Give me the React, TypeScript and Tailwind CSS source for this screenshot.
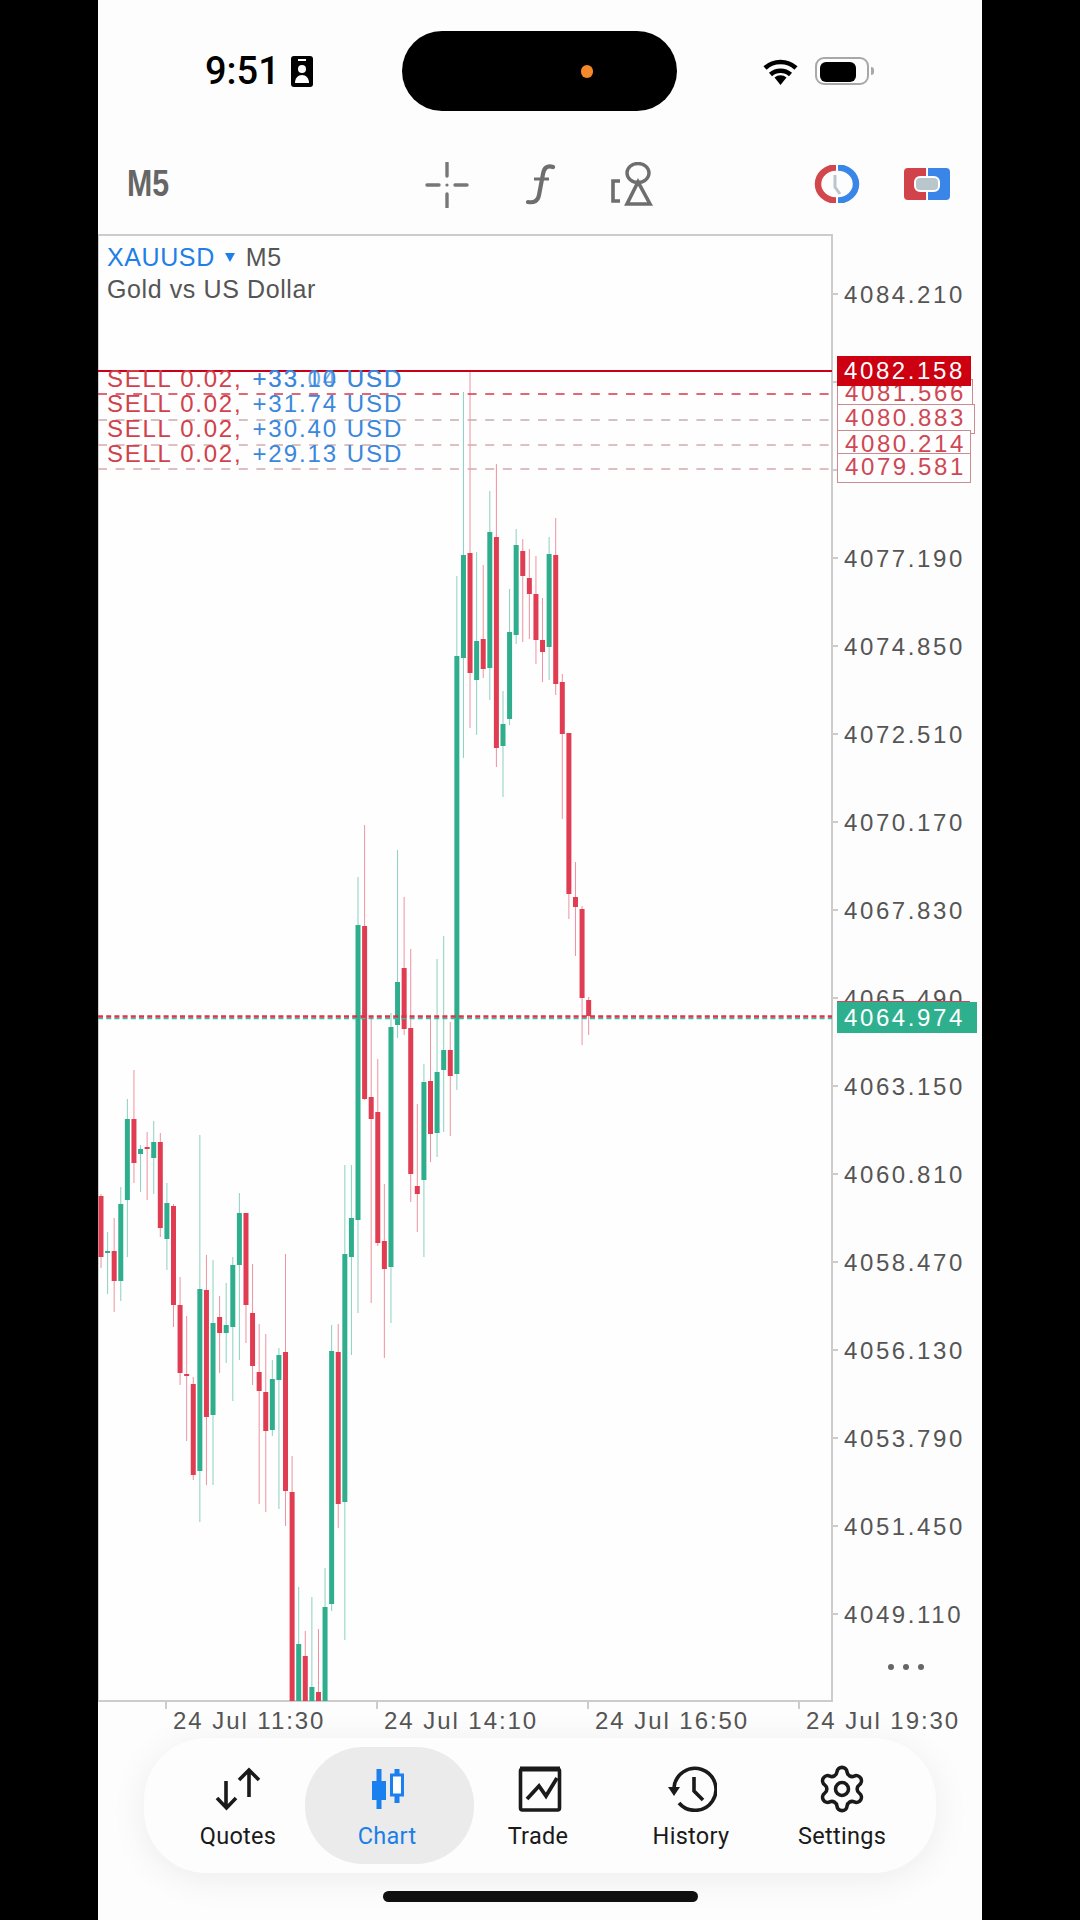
import { Settings } from 'lucide-react'

const SANS = 'font-["Liberation_Sans",Arial,sans-serif]'

// [g/r, wick top, body top, body bottom, wick bottom], real page y values
type Candle = [0 | 1, number, number, number, number]
const CANDLES: Candle[] = [
  [0, 1194, 1196, 1257, 1268], [1, 1232, 1251, 1253, 1294], [0, 1218, 1251, 1281, 1312], [1, 1187, 1204, 1281, 1301],
  [1, 1099, 1119, 1200, 1257], [0, 1070, 1119, 1163, 1183], [1, 1145, 1149, 1154, 1192], [0, 1132, 1147, 1149, 1200],
  [1, 1121, 1142, 1158, 1194], [0, 1133, 1142, 1228, 1237], [1, 1183, 1203, 1239, 1270], [0, 1204, 1206, 1305, 1327],
  [0, 1277, 1305, 1373, 1385], [0, 1316, 1374, 1376, 1441], [0, 1377, 1384, 1475, 1480], [1, 1135, 1289, 1471, 1522],
  [0, 1255, 1290, 1417, 1485], [1, 1260, 1323, 1415, 1485], [0, 1296, 1317, 1333, 1373], [1, 1283, 1325, 1333, 1363],
  [1, 1257, 1265, 1327, 1401], [1, 1193, 1213, 1265, 1360], [0, 1213, 1213, 1305, 1343], [0, 1264, 1313, 1366, 1385],
  [0, 1324, 1372, 1391, 1504], [0, 1334, 1392, 1431, 1512], [1, 1360, 1379, 1430, 1436], [1, 1348, 1355, 1380, 1509],
  [0, 1254, 1352, 1491, 1526], [0, 1456, 1492, 1701, 1701], [1, 1587, 1644, 1701, 1701], [0, 1631, 1656, 1701, 1701],
  [1, 1597, 1687, 1701, 1701], [0, 1629, 1692, 1701, 1701], [1, 1568, 1607, 1701, 1701], [1, 1325, 1351, 1604, 1611],
  [0, 1324, 1352, 1504, 1528], [1, 1165, 1254, 1502, 1640], [1, 1165, 1218, 1257, 1355], [1, 877, 925, 1220, 1313],
  [0, 825, 926, 1099, 1100], [0, 1017, 1097, 1119, 1303], [0, 1059, 1112, 1243, 1246], [0, 1184, 1241, 1269, 1358],
  [1, 1013, 1027, 1267, 1323], [1, 850, 982, 1025, 1038], [0, 897, 968, 1029, 1035], [0, 949, 1028, 1174, 1202],
  [0, 1104, 1186, 1194, 1232], [1, 1064, 1082, 1180, 1257], [0, 1019, 1081, 1134, 1162], [1, 959, 1072, 1133, 1157],
  [1, 936, 1050, 1070, 1132], [0, 1022, 1050, 1076, 1136], [1, 576, 656, 1074, 1090], [1, 392, 555, 658, 758],
  [0, 372, 553, 673, 728], [1, 552, 641, 680, 735], [0, 565, 639, 669, 678], [1, 491, 532, 668, 700],
  [0, 464, 537, 748, 767], [1, 691, 724, 746, 797], [1, 589, 632, 719, 725], [1, 529, 545, 635, 644],
  [0, 539, 551, 576, 642], [0, 549, 578, 594, 639], [0, 556, 594, 640, 664], [0, 598, 640, 652, 682],
  [1, 537, 554, 647, 680], [0, 518, 555, 684, 695], [0, 674, 682, 734, 819], [0, 733, 733, 894, 919],
  [0, 862, 897, 907, 956], [0, 906, 909, 998, 1045], [0, 997, 1000, 1016, 1035],
]

const PRICES: [string, number][] = [
  ['4084.210', 294], ['4077.190', 558], ['4074.850', 646], ['4072.510', 734], ['4070.170', 822], ['4067.830', 910],
  ['4065.490', 998], ['4063.150', 1086], ['4060.810', 1174], ['4058.470', 1262], ['4056.130', 1350],
  ['4053.790', 1438], ['4051.450', 1526], ['4049.110', 1614],
]

const ORDER_TAGS: [string, number, number, number][] = [
  ['4081.566', 379, 406, 136],
  ['4080.883', 404, 434, 138],
  ['4080.214', 430, 456, 134],
  ['4079.581', 453, 483, 134],
]

const ORDER_LINES: [number, string][] = [[394, '#d8344a'], [420, '#c9adad'], [445, '#d5abab'], [469, '#d3a9a9']]

const SELLS = ['+31.74 USD', '+30.40 USD', '+29.13 USD']
const TIMES = ['24 Jul 11:30', '24 Jul 14:10', '24 Jul 16:50', '24 Jul 19:30']

function ChartSvg() {
  return (
    <svg className="absolute inset-0" width={884} height={1468} viewBox="98 234 884 1468">
      {CANDLES.map(([up, wt, bt, bb, wb], i) => {
        const x = 101 + 6.59 * i
        const color = up ? '#2fae8e' : '#e03d52'
        return (
          <g key={i}>
            <line x1={x} x2={x} y1={wt} y2={wb} stroke={color} strokeWidth={1} opacity={0.55} />
            <rect x={x - 2.5} y={bt} width={5} height={Math.max(bb - bt, 2)} fill={color} />
          </g>
        )
      })}
      <rect x={98} y={370} width={734} height={2} fill="#c8001a" />
      {ORDER_LINES.map(([y, c]) => (
        <line key={y} x1={98} x2={832} y1={y} y2={y} stroke={c} strokeWidth={1.5} strokeDasharray="9 8.6" />
      ))}
      <line x1={98} x2={832} y1={1018.5} y2={1018.5} stroke="#33c0a0" strokeWidth={1.5} strokeDasharray="5 3.2" />
      <line x1={98} x2={832} y1={1016.5} y2={1016.5} stroke="#d8344a" strokeWidth={2.5} strokeDasharray="5 3.2" />
      {[...PRICES.map(p => p[1]), 382, 470].map(y => (
        <line key={y} x1={832} x2={838} y1={y} y2={y} stroke="#cccccc" strokeWidth={2} />
      ))}
    </svg>
  )
}

function StatusBar() {
  return (
    <div className="relative h-[112px] shrink-0">
      <div className="absolute left-[107px] top-[52px] flex items-center gap-[11px]">
        <span className='font-["Roboto",sans-serif] font-medium text-[38px] leading-[38px] text-black'>9:51</span>
        <svg width={22} height={31} viewBox="0 0 22 31">
          <rect width={22} height={31} rx={3} fill="#000" />
          <rect x={7} y={3} width={8} height={2} fill="#fff" />
          <circle cx={11} cy={13} r={4} fill="#fff" />
          <path d="M4 27c0-5 3-8 7-8s7 3 7 8z" fill="#fff" />
        </svg>
      </div>
      <div className="absolute left-[304px] top-[31px] w-[275px] h-[80px] rounded-[40px] bg-black">
        <div className="absolute left-[179px] top-[34px] w-[12px] h-[13px] rounded-full bg-[#f5892a]" />
      </div>
      <div className="absolute left-[664px] top-[57px] flex items-center gap-[16px]">
        <svg width={37} height={28} viewBox="0 0 37 28">
          <path d="M18.5 28l-6-7.5a9 9 0 0 1 12 0z" fill="#000" />
          <path d="M3 11a23 23 0 0 1 31 0M8.5 17.5a15 15 0 0 1 20 0" fill="none" stroke="#000" strokeWidth={4.6} />
        </svg>
        <div className="relative w-[54px] h-[28px] rounded-[9px] border-2 border-[#a8a8a8] p-[3px]">
          <div className="w-[36px] h-[20px] rounded-[6px] bg-black" />
          <div className="absolute right-[-7px] top-[8px] w-[3px] h-[8px] rounded-r-full bg-[#a8a8a8]" />
        </div>
      </div>
    </div>
  )
}

function Toolbar() {
  return (
    <div className="relative h-[122px] shrink-0">
      <span className={`absolute left-[29px] top-[53px] origin-left scale-x-[0.82] ${SANS} font-bold text-[37px] leading-[38px] text-[#666666]`}>M5</span>
      <svg className="absolute left-[326px] top-[50px]" width={46} height={46} viewBox="0 0 46 46">
        <path d="M23 1v13M23 32v13M3 23h12M31 23h12" stroke="#777" strokeWidth={3.4} strokeLinecap="round" fill="none" />
        <circle cx={23} cy={23} r={1.6} fill="#777" />
      </svg>
      <svg className="absolute left-[426px] top-[52px]" width={32} height={42} viewBox="0 0 32 42">
        <path d="M29 3c-6-2-9 1-10 7l-4 21c-1 6-5 8-11 7" fill="none" stroke="#6e6e6e" strokeWidth={4.2} strokeLinecap="round" />
        <path d="M10 15h15" stroke="#6e6e6e" strokeWidth={3} />
      </svg>
      <svg className="absolute left-[513px] top-[50px]" width={42} height={44} viewBox="0 0 42 44">
        <ellipse cx={27} cy={11} rx={11} ry={9.500} fill="none" stroke="#6e6e6e" strokeWidth={3.4} />
        <path d="M27 20l-11 22h23z" fill="none" stroke="#6e6e6e" strokeWidth={3.6} />
        <path d="M9 19H2v20h7" fill="none" stroke="#6e6e6e" strokeWidth={3.6} />
      </svg>
      <svg className="absolute left-[716px] top-[53px]" width={46} height={38} viewBox="0 0 46 38">
        <path d="M22 2.5C12 2.5 4 10 4 19s8 16.500 18 16.500" fill="none" stroke="#d2474b" strokeWidth={6.5} />
        <path d="M24 2.500C34 2.500 42 10 42 19s-8 16.500-18 16.500" fill="none" stroke="#3a86e8" strokeWidth={6.5} />
        <path d="M21 10v12l5 7" fill="none" stroke="#bcc5cc" strokeWidth={3} />
      </svg>
      <svg className="absolute left-[806px] top-[56px]" width={46} height={32} viewBox="0 0 46 32">
        <path d="M22 0H4a4 4 0 0 0-4 4v24a4 4 0 0 0 4 4h18z" fill="#d2424a" />
        <path d="M24 0h18a4 4 0 0 1 4 4v24a4 4 0 0 1-4 4H24z" fill="#3a86e8" />
        <rect x={11} y={9} width={24} height={14} rx={5} fill="#b9c6cc" stroke="#fff" strokeWidth={2} />
      </svg>
    </div>
  )
}

function ChartArea() {
  return (
    <div className={`relative h-[1468px] shrink-0 ${SANS}`}>
      <div className="absolute left-0 top-0 w-[735px] h-full border-2 border-l-[1px] border-[#cccccc] bg-[#fefefe]" />
      <ChartSvg />

      <div className="absolute left-[9px] top-[7px] text-[#555555] text-[25px] leading-[32px] tracking-[0.6px]">
        <div className="flex items-center">
          <span className="text-[#1f7fe8] tracking-[0.6px]">XAUUSD</span>
          <span className="ml-[10px] w-0 h-0 border-x-[5px] border-x-transparent border-t-[9px] border-t-[#1f7fe8]" />
          <span className="ml-[11px]">M5</span>
        </div>
        <div>Gold vs US Dollar</div>
      </div>

      {/* open positions */}
      <div className="absolute left-[9px] top-[132px] flex flex-col text-[24px] leading-[25px] tracking-[1.75px]">
        <div className="flex gap-[10px] h-[25px]">
          <span className="text-[#d1414b]">SELL 0.02,</span>
          <span className="relative text-[#3a87dd] tracking-[1.95px]">
            +33.10 USD
            <span className="absolute left-0 top-0 opacity-70">+33.04 USD</span>
          </span>
        </div>
        {SELLS.map(s => (
          <div key={s} className="flex gap-[10px] h-[25px]">
            <span className="text-[#d1414b]">SELL 0.02,</span>
            <span className="text-[#3a87dd] tracking-[1.95px]">{s}</span>
          </div>
        ))}
      </div>

      {PRICES.map(([p, y]) => (
        <span
          key={p}
          className="absolute left-[746px] h-[26px] text-[24px] leading-[26px] tracking-[2.6px] text-[#555555]"
          style={{ top: y - 234 - 12 }}
        >
          {p}
        </span>
      ))}

      {ORDER_TAGS.map(([p, top, bottom, w]) => (
        <div
          key={p}
          className="absolute left-[739px] pl-[7px] border border-[#c98c90] bg-[#fefefe] text-[24px] leading-[26px] tracking-[2.6px] text-[#cf4855] overflow-hidden"
          style={{ top: top - 234, height: bottom - top, width: w }}
        >
          {p}
        </div>
      ))}
      <div className="absolute left-[739px] top-[122px] w-[134px] h-[30px] pl-[7px] bg-[#cc0011] text-[24px] leading-[30px] tracking-[2.6px] text-white">
        4082.158
      </div>

      <div className="absolute left-[739px] top-[767px] w-[133px] h-[2px] bg-[#cf4855]" />
      <div className="absolute left-[739px] top-[768px] w-[140px] h-[31px] pl-[7px] bg-[#2eb08f] text-[24px] leading-[31px] tracking-[2.6px] text-white">
        4064.974
      </div>

      <div className="absolute left-[790px] bottom-[32px] flex gap-[9px]">
        <div className="w-[6px] h-[6px] rounded-full bg-[#666666]" />
        <div className="w-[6px] h-[6px] rounded-full bg-[#666666]" />
        <div className="w-[6px] h-[6px] rounded-full bg-[#666666]" />
      </div>
    </div>
  )
}

function TimeAxis() {
  return (
    <div className={`relative h-[36px] shrink-0 flex pl-[67px] ${SANS}`}>
      {TIMES.map(t => (
        <div key={t} className="relative w-[211px] shrink-0 pl-[8px] pt-[6px] text-[24px] leading-[26px] tracking-[1.95px] whitespace-pre text-[#555555]">
          <div className="absolute left-0 top-0 w-[2px] h-[7px] bg-[#cccccc]" />
          {t}
        </div>
      ))}
    </div>
  )
}

function QuotesIcon() {
  return (
    <svg width={50} height={44} viewBox="0 0 50 44" fill="none" stroke="#1a1a1a" strokeWidth={3.6}>
      <path d="M13 14v27M4 31l9.500 10L23 31" />
      <path d="M36 30V3M26 13l10-10 10 10" />
    </svg>
  )
}

function ChartIcon() {
  return (
    <svg width={36} height={44} viewBox="0 0 36 44" fill="none">
      <path d="M8 2v40M26 2v34" stroke="#1a80f0" strokeWidth={5} />
      <rect x={1} y={14} width={14} height={19} fill="#1a80f0" />
      <rect x={20.500} y={8} width={11} height={20} fill="#fff" stroke="#1a80f0" strokeWidth={3} />
    </svg>
  )
}

function TradeIcon() {
  return (
    <svg width={44} height={46} viewBox="0 0 44 46" fill="none" stroke="#1a1a1a">
      <rect x={2.500} y={3} width={39} height={41} rx={2} strokeWidth={3.6} />
      <path d="M2 3h40" strokeWidth={5} />
      <path d="M9 33l12-13 7 10 11-18" strokeWidth={3.8} />
    </svg>
  )
}

function HistoryIcon() {
  return (
    <svg width={52} height={46} viewBox="0 0 52 46" fill="none" stroke="#1a1a1a" strokeWidth={3.6}>
      <path d="M14 37A21 21 0 1 0 9 22" />
      <path d="M3 21h12l-6 9z" fill="#1a1a1a" stroke="none" />
      <path d="M29 11v14l9 9" />
    </svg>
  )
}

function TabItem({ label, icon, active, labelClass }: { label: string; icon: React.ReactNode; active?: boolean; labelClass?: string }) {
  return (
    <div className="flex flex-col items-center w-[124px] shrink-0">
      <div className="h-[46px] flex items-center justify-center">{icon}</div>
      <span className={`mt-[10px] font-["Roboto",sans-serif] text-[23.5px] leading-[28px] tracking-[0.3px] ${labelClass ?? ''} ${active ? 'text-[#1a80e8]' : 'text-[#1a1a1a]'}`}>{label}</span>
    </div>
  )
}

function TabBar() {
  return (
    <div className="relative shrink-0 mx-[46px] h-[135px] rounded-[62px] bg-[#fdfdfd] shadow-[0_6px_36px_rgba(0,0,0,0.07)] flex items-center pl-[32px] pt-[5px]">
      <div className="absolute left-[161px] top-[9px] w-[169px] h-[117px] rounded-[58px] bg-[#ebebeb]" />
      <div className="relative flex gap-[27px]">
        <TabItem label="Quotes" icon={<QuotesIcon />} />
        <TabItem label="Chart" active icon={<ChartIcon />} labelClass="-ml-[4px]" />
        <TabItem label="Trade" icon={<TradeIcon />} labelClass="-ml-[4px]" />
        <TabItem label="History" icon={<HistoryIcon />} />
        <TabItem label="Settings" icon={<Settings size={52} strokeWidth={1.65} color="#1a1a1a" />} />
      </div>
    </div>
  )
}

export default function App() {
  return (
    <div className="w-[1080px] h-[1920px] bg-black flex justify-center overflow-hidden">
      <div className="w-[884px] h-full bg-[#fdfdfd] flex flex-col">
        <StatusBar />
        <Toolbar />
        <ChartArea />
        <TimeAxis />
        <TabBar />
        <div className="mx-auto mt-[18px] w-[315px] h-[11px] rounded-full bg-[#111111]" />
      </div>
    </div>
  )
}
